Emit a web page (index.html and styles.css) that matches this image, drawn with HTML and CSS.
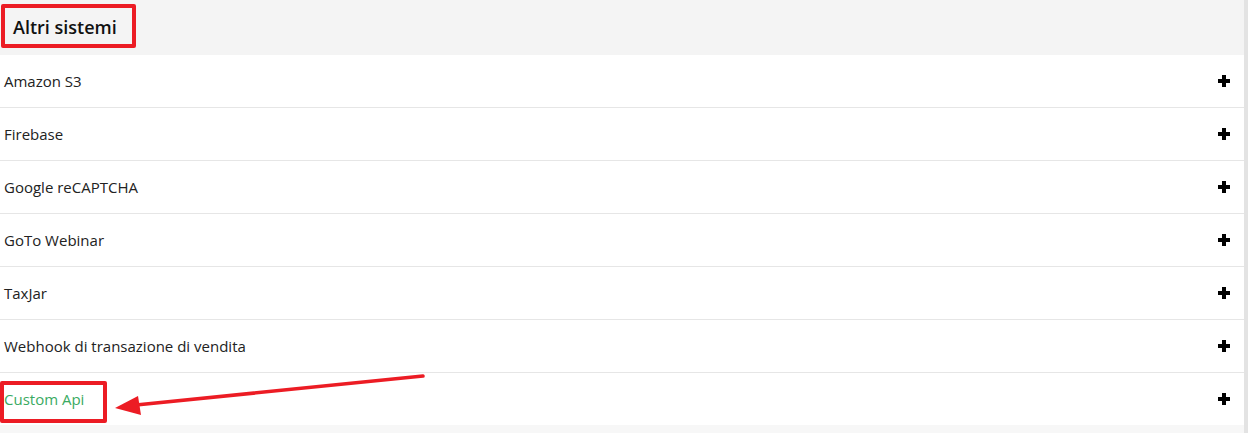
FILE: index.html
```html
<!DOCTYPE html>
<html lang="it">
<head>
<meta charset="utf-8">
<title>Altri sistemi</title>
<link rel="stylesheet" href="styles.css">
</head>
<body>
<div class="page">
  <div class="panel">
    <div class="panel-head">
      <h2 class="panel-title">Altri sistemi</h2>
    </div>
    <ul class="list">
      <li class="row"><span class="row-label">Amazon S3</span><span class="plus"></span></li>
      <li class="row"><span class="row-label">Firebase</span><span class="plus"></span></li>
      <li class="row"><span class="row-label">Google reCAPTCHA</span><span class="plus"></span></li>
      <li class="row"><span class="row-label">GoTo Webinar</span><span class="plus"></span></li>
      <li class="row"><span class="row-label">TaxJar</span><span class="plus"></span></li>
      <li class="row"><span class="row-label">Webhook di transazione di vendita</span><span class="plus"></span></li>
      <li class="row row-last"><span class="row-label row-label-green">Custom Api</span><span class="plus"></span></li>
    </ul>
    <div class="panel-foot"></div>
  </div>
  <div class="scrollbar"></div>
</div>
<div class="mark mark-head"></div>
<div class="mark mark-custom"></div>
<svg class="arrow" width="1248" height="433" viewBox="0 0 1248 433">
  <line x1="423" y1="376" x2="136" y2="405" stroke="#ec1c24" stroke-width="3.5" stroke-linecap="round"/>
  <polygon points="115,408 138,396 141,415" fill="#ec1c24"/>
</svg>
</body>
</html>
```

FILE: styles.css
```css
html, body {
  margin: 0;
  padding: 0;
  background: #ffffff;
}
body {
  font-family: "Open Sans", "Noto Sans", sans-serif;
  color: #222222;
  width: 1248px;
  height: 433px;
  overflow: hidden;
  position: relative;
}
.page {
  display: flex;
  height: 433px;
}
.panel {
  flex: 1;
  display: flex;
  flex-direction: column;
  background: #ffffff;
}
.scrollbar {
  width: 4px;
  background: #e3e3e3;
}
.panel-head {
  height: 55px;
  background: #f4f4f4;
  display: flex;
  align-items: center;
  padding-left: 13px;
  box-sizing: border-box;
}
.panel-title {
  margin: 0;
  font-size: 18px;
  font-weight: 600;
  color: #111111;
  position: relative;
  top: -1px;
}
.list {
  list-style: none;
  margin: 0;
  padding: 0;
}
.row {
  height: 52px;
  border-bottom: 1px solid #e6e6e6;
  display: flex;
  align-items: center;
  justify-content: space-between;
  padding: 0 14px 0 4px;
}
.row-last {
  border-bottom: none;
}
.row-label {
  font-size: 15px;
  color: #222222;
}
.row-label-green {
  color: #3aaa62;
}
.plus {
  width: 12px;
  height: 12px;
  background:
    linear-gradient(#000, #000) center / 12px 4px no-repeat,
    linear-gradient(#000, #000) center / 4px 12px no-repeat;
  border-radius: 1px;
}
.panel-foot {
  flex: 1;
  background: #f7f7f7;
}
.mark {
  position: absolute;
  border: 4px solid #ec1c24;
  border-radius: 2px;
  box-sizing: border-box;
}
.mark-head {
  left: 1px;
  top: 4px;
  width: 135px;
  height: 44px;
}
.mark-custom {
  left: 0;
  top: 381px;
  width: 107px;
  height: 42px;
}
.arrow {
  position: absolute;
  left: 0;
  top: 0;
  pointer-events: none;
}
```
